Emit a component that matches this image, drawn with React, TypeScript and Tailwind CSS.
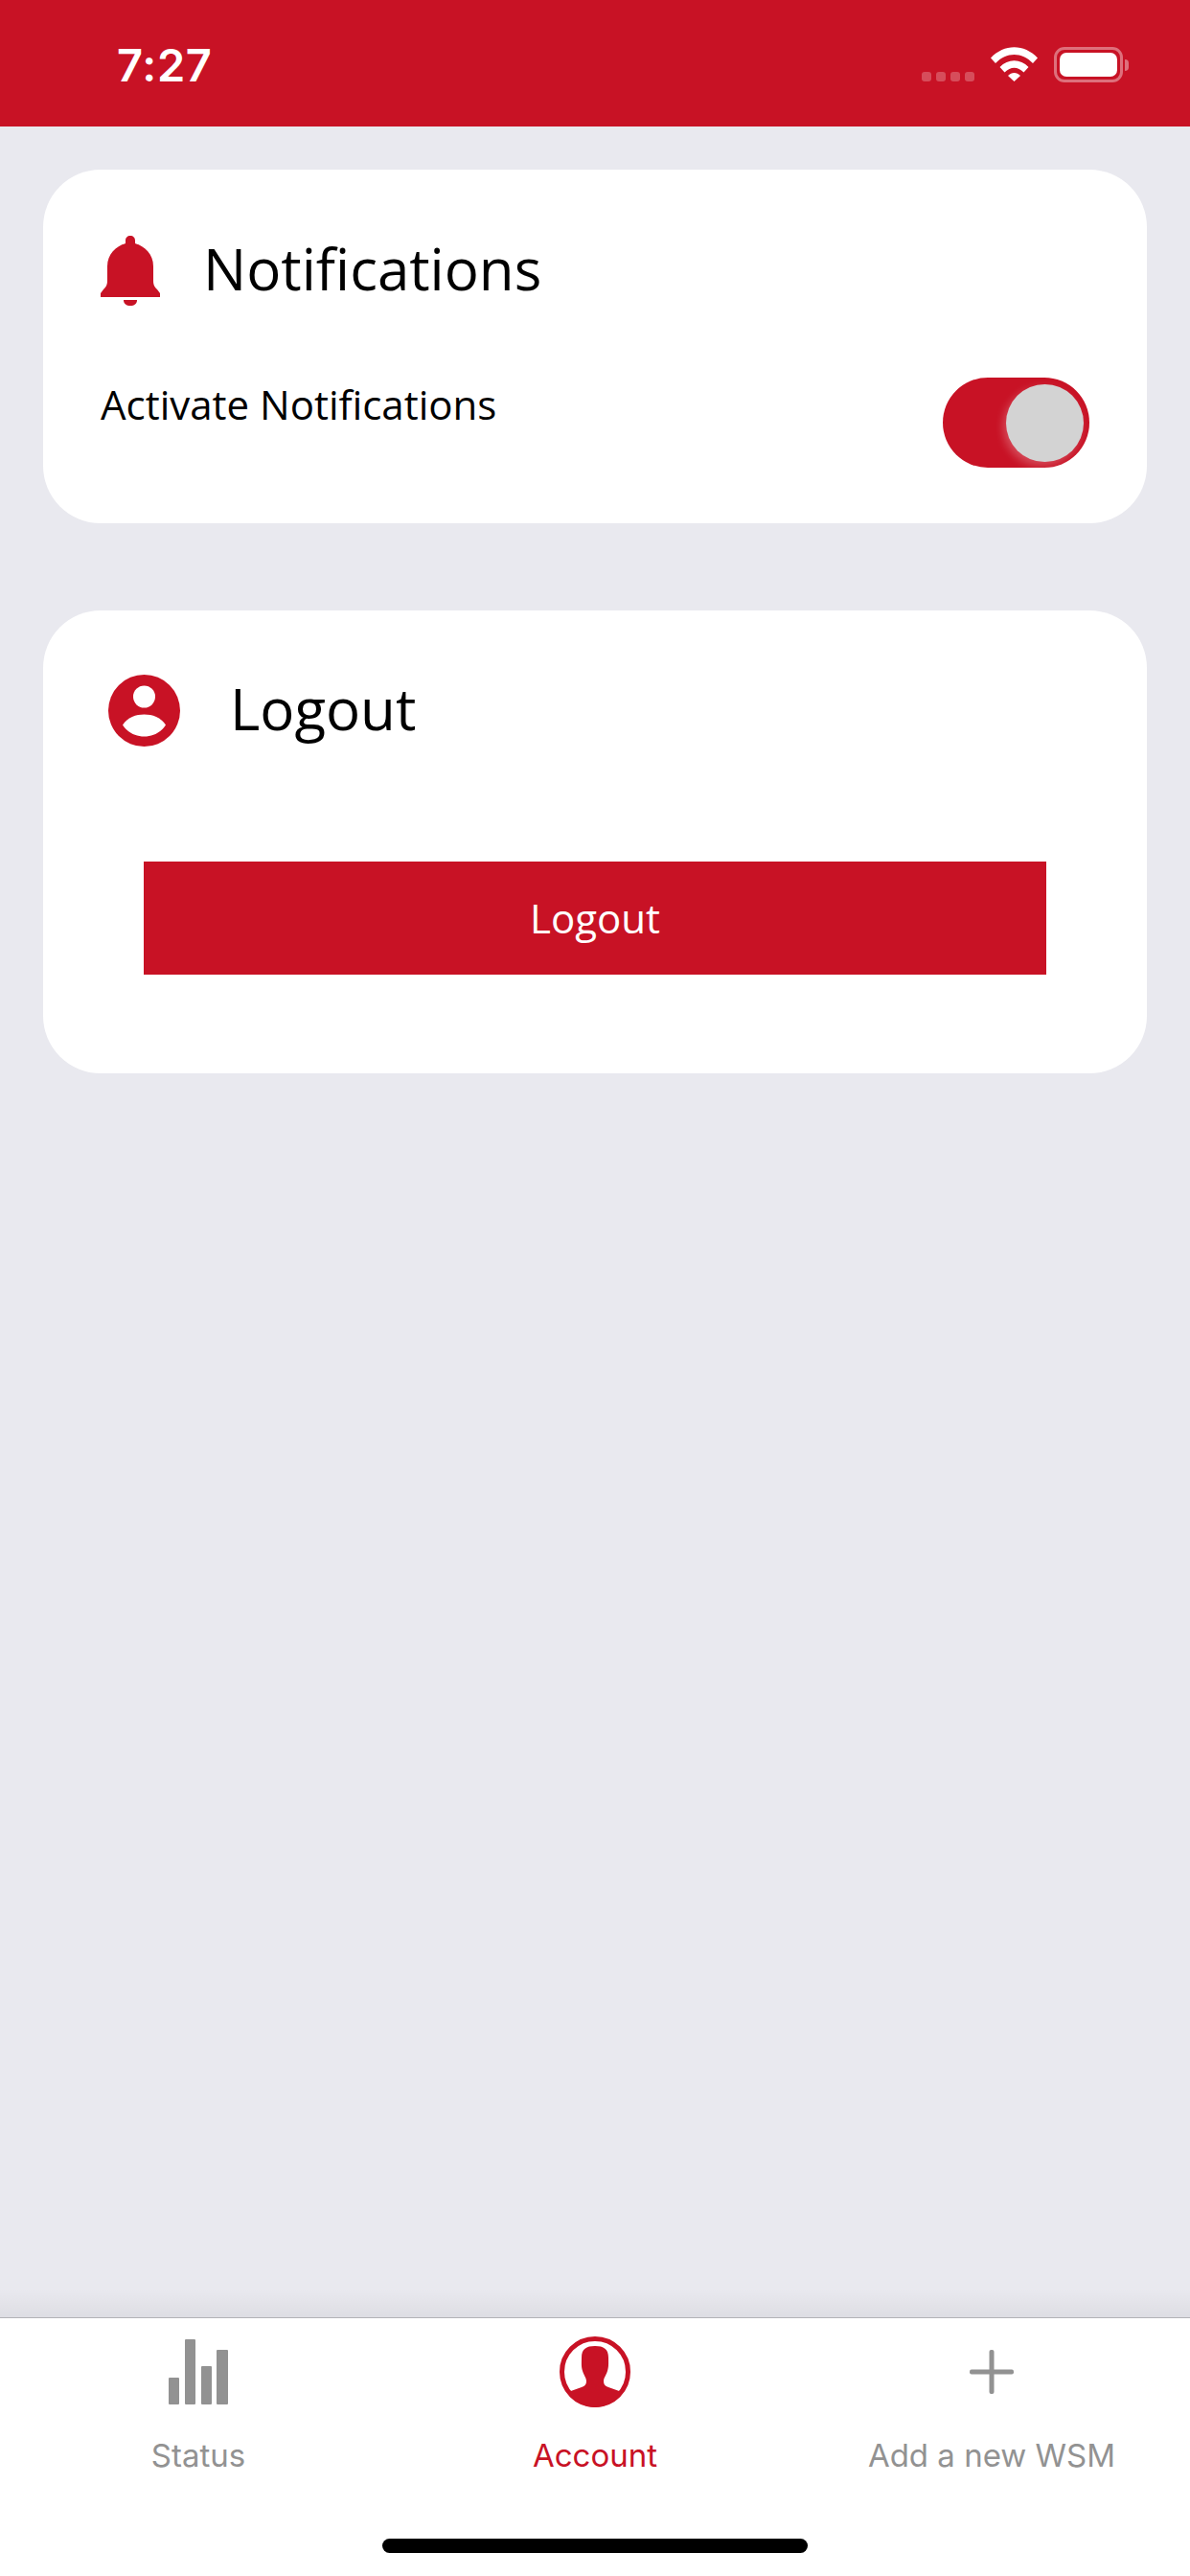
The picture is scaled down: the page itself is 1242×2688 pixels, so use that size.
const RED = '#c81225';

function StatusBar() {
  return (
    <div className="h-[132px] bg-[#c81225] flex items-start justify-between pl-[122px] pr-[70px] shrink-0">
      <span className="mt-[41px] text-[47px] leading-[54px] font-semibold text-white font-['Inter',sans-serif] tracking-[0.7px]">
        7:27
      </span>
      <div className="flex items-start mt-[49px]">
        <div className="flex gap-[5px] mt-[26px] mr-[17px]">
          {[0, 1, 2, 3].map(i => (
            <div key={i} className="w-[10px] h-[10px] rounded-[3px] bg-white/25" />
          ))}
        </div>
        <svg width="49" height="36" viewBox="0 0 49 36" className="mr-[17px]">
          <path d="M0 11.5 C14 -3.5 35 -3.5 49 11.5 L44 17 C32.5 5 16.5 5 5 17 Z" fill="#fff" />
          <path d="M9.5 21 C18 12 31 12 39.5 21 L34.5 26.5 C28 20 21 20 14.5 26.5 Z" fill="#fff" />
          <path d="M18 30 C22 26 27 26 31 30 L24.5 36 Z" fill="#fff" />
        </svg>
        <div className="relative w-[72px] h-[37px] rounded-[11px] border-[3px] border-white/40 p-[3px]">
          <div className="w-full h-full rounded-[7px] bg-white" />
          <div className="absolute right-[-9px] top-[10px] w-[4px] h-[12px] rounded-r-[4px] bg-white/40" />
        </div>
      </div>
    </div>
  );
}

function BellIcon() {
  return (
    <svg width="62" height="73" viewBox="0 0 62 73" fill={RED}>
      <path d="M31 0 C34 0 36 2 36 5 L36 8 C46 11 55 19 55 32 L55 47 C55 52 57 54 59 56 L62 60 L62 64 L0 64 L0 60 L3 56 C5 54 7 52 7 47 L7 32 C7 19 16 11 26 8 L26 5 C26 2 28 0 31 0 Z" />
      <path d="M24 67 L38 67 C38 71 35 73 31 73 C27 73 24 71 24 67 Z" />
    </svg>
  );
}

function PersonIcon() {
  return (
    <svg width="75" height="75" viewBox="0 0 75 75">
      <circle cx="37.5" cy="37.5" r="37.5" fill={RED} />
      <circle cx="37.5" cy="23" r="11.5" fill="#fff" />
      <path d="M15 52.5 C20 44.5 29 41.5 37.5 41.5 C46 41.5 55 44.5 60 52.5 C55 60 47 64.5 37.5 64.5 C28 64.5 20 60 15 52.5 Z" fill="#fff" />
    </svg>
  );
}

function StatusIcon() {
  return (
    <svg width="62" height="68" viewBox="0 0 62 68" fill="#929292">
      <rect x="0" y="40" width="11" height="28" rx="1" />
      <rect x="17" y="0" width="11" height="68" rx="1" />
      <rect x="34" y="28" width="11" height="40" rx="1" />
      <rect x="50" y="11" width="12" height="57" rx="1" />
    </svg>
  );
}

function AccountIcon() {
  return (
    <svg width="74" height="74" viewBox="0 0 74 74">
      <circle cx="37" cy="37" r="34.5" fill="none" stroke={RED} strokeWidth="5" />
      <path
        d="M37 10 C46 10 51 13 51 22 C51 28 51.5 31 50 36 C48.5 41 46 43 46 47 C46 50 47.5 52 51 53 L65 58 C58 68 48 74 37 74 C26 74 16 68 9 58 L23 53 C26.5 52 28 50 28 47 C28 43 25.5 41 24 36 C22.5 31 23 28 23 22 C23 13 28 10 37 10 Z"
        fill={RED}
      />
    </svg>
  );
}

function PlusIcon() {
  return (
    <svg width="46" height="46" viewBox="0 0 46 46" fill="#929292">
      <rect x="0" y="20.5" width="46" height="5" rx="2" />
      <rect x="20.5" y="0" width="5" height="46" rx="2" />
    </svg>
  );
}

function TabItem({ label, active, children }: { label: string; active?: boolean; children: React.ReactNode }) {
  return (
    <div className="flex flex-col items-center">
      <div className="h-[94px] flex items-center justify-center">{children}</div>
      <span
        className={`mt-[20px] text-[33px] leading-[40px] font-['Inter',sans-serif] ${
          active ? 'text-[#c81225]' : 'text-[#929292]'
        }`}
      >
        {label}
      </span>
    </div>
  );
}

export default function App() {
  return (
    <div className="w-[1242px] h-[2688px] flex flex-col bg-[#e9e9ef] overflow-hidden font-['Open_Sans',sans-serif]">
      <StatusBar />

      <main className="flex-1 px-[45px] pt-[45px] flex flex-col gap-[91px]">
        {/* Notifications */}
        <section className="bg-white rounded-[60px] h-[369px] pl-[60px] pr-[60px] pt-[69px]">
          <div className="flex items-center gap-[45px] h-[73px]">
            <BellIcon />
            <h2 className="text-[60px] leading-[80px] text-black font-normal -mt-[6px]">Notifications</h2>
          </div>
          <div className="flex justify-between mt-[74px]">
            <span className="text-[42px] leading-[58px] text-black">Activate Notifications</span>
            <div className="relative w-[153px] h-[94px] rounded-full bg-[#c81225] mt-[1px]">
              <div className="absolute right-[6px] top-[7px] w-[81px] h-[81px] rounded-full bg-[#d3d3d3] shadow-[-3px_4px_10px_rgba(255,255,255,0.25)]" />
            </div>
          </div>
        </section>

        {/* Logout */}
        <section className="bg-white rounded-[60px] h-[483px] pt-[67px]">
          <div className="flex items-center gap-[52px] h-[75px] pl-[68px]">
            <PersonIcon />
            <h2 className="text-[60px] leading-[80px] text-black font-normal -mt-[5px]">Logout</h2>
          </div>
          <button className="block mx-auto mt-[120px] w-[942px] h-[118px] bg-[#c81225] text-white text-[42px] leading-[58px]">
            Logout
          </button>
        </section>
      </main>

      {/* Tab bar */}
      <div className="relative h-[270px] shrink-0 bg-white border-t-[1.5px] border-[#b2b2b6]">
        <div className="absolute left-0 right-0 top-[-30px] h-[29px] bg-gradient-to-b from-transparent to-black/5" />
        <div className="grid grid-cols-3 pt-[9px]">
          <TabItem label="Status">
            <StatusIcon />
          </TabItem>
          <TabItem label="Account" active>
            <AccountIcon />
          </TabItem>
          <TabItem label="Add a new WSM">
            <PlusIcon />
          </TabItem>
        </div>
        <div className="absolute left-[399px] bottom-[24px] w-[444px] h-[15px] rounded-full bg-black" />
      </div>
    </div>
  );
}
